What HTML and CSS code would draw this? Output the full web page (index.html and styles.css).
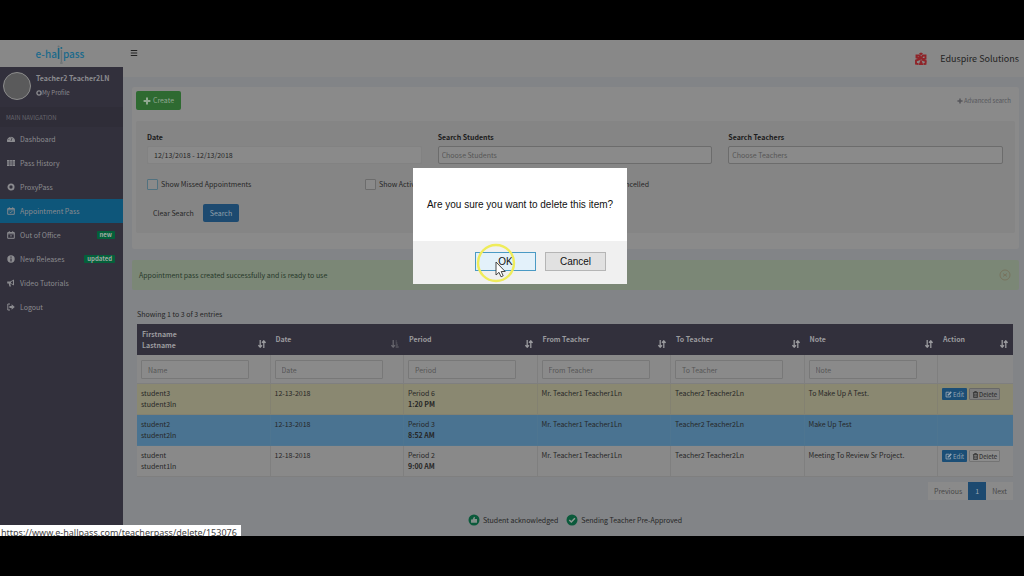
FILE: index.html
```html
<!DOCTYPE html>
<html lang="en">
<head>
<meta charset="utf-8">
<title>Appointment Pass</title>
<link rel="stylesheet" href="styles.css">
</head>
<body>
<svg class="defs" aria-hidden="true">
  <symbol id="sort" viewBox="0 0 8 8"><path d="M2.2 0v7M.4 5.2l1.8 2 1.8-2M5.8 8V1M4 2.8l1.8-2 1.8 2" fill="none" stroke="currentColor" stroke-width="1.3"/></symbol>
  <symbol id="sort-asc" viewBox="0 0 8 8"><path d="M2.2 0v7M.4 5.2l1.8 2 1.8-2" fill="none" stroke="currentColor" stroke-width="1.2"/><path d="M4.7 1h1M4.7 3h1.6M4.7 5h2.2M4.7 7h3" stroke="currentColor"/></symbol>
  <symbol id="edit" viewBox="0 0 8 8"><path d="M5 1.4H1.2v5.4h5.2V5" fill="none" stroke="currentColor"/><path d="M3 5.5l.3-1.7L6.6.4l1.2 1.2-3.3 3.5z" fill="currentColor"/></symbol>
  <symbol id="trash" viewBox="0 0 8 8"><path d="M1 1.8h6M3 1.6V.6h2v1M1.8 2v5.4h4.4V2M3.2 3v3.4M4.8 3v3.4" fill="none" stroke="currentColor" stroke-width=".8"/></symbol>
  <symbol id="plus" viewBox="0 0 8 8"><path d="M4 .6v6.8M.6 4h6.8" stroke="currentColor" stroke-width="2"/></symbol>
</svg>
<div class="app">
  <aside class="side">
    <a class="brand" href="#" aria-label="e-hallpass"><span>e-ha</span><svg class="people" viewBox="0 0 6 22"><circle cx="1.6" cy="3.6" r="1" fill="#6a7174"/><path d="M1.6 5v11" stroke="#1b6685" stroke-width="1.6"/><circle cx="4.4" cy="5" r="1" fill="#1b6685"/><path d="M4.4 7v12M3.2 20h2.400" stroke="#6a7174" stroke-width="1.4"/></svg><span>pass</span></a>
    <div class="user">
      <span class="avatar"></span>
      <div><strong>Teacher2 Teacher2LN</strong><a href="#"><svg class="tiny" viewBox="0 0 8 8"><circle cx="4" cy="4" r="2.8" fill="none" stroke="currentColor" stroke-width="1.8"/></svg>My Profile</a></div>
    </div>
    <h2>MAIN NAVIGATION</h2>
    <nav>
      <a href="#"><svg viewBox="0 0 8 8"><path d="M.2 7a4 4 0 1 1 7.6 0z" fill="currentColor"/><path d="M4 6l1-3M1.5 4.5h.8M3.5 2.3h.8" stroke="#32303c" stroke-width=".7"/></svg>Dashboard</a>
      <a href="#"><svg viewBox="0 0 8 8"><path d="M0 1h8v6H0z" fill="currentColor"/><path d="M0 3h8M0 5h8M2.7 1v6M5.3 1v6" stroke="#32303c" stroke-width=".5"/></svg>Pass History</a>
      <a href="#"><svg viewBox="0 0 8 8"><circle cx="4" cy="4" r="2.6" fill="none" stroke="currentColor" stroke-width="1.9"/></svg>ProxyPass</a>
      <a href="#" class="on"><svg viewBox="0 0 8 8"><path d="M.7 1.5h6.6v5.8H.7zM.7 2.8h6.6M2.3.2v1.6M5.7.2v1.6M2.6 4.8l1 1 2-2" fill="none" stroke="currentColor" stroke-width=".9"/></svg>Appointment Pass</a>
      <a href="#"><svg viewBox="0 0 8 8"><path d="M.7 1.5h6.6v5.8H.7zM.7 2.8h6.6M2.3.2v1.6M5.7.2v1.6M3.2 4.9h1.6" fill="none" stroke="currentColor"/></svg>Out of Office<b>new</b></a>
      <a href="#"><svg viewBox="0 0 8 8"><circle cx="4" cy="4" r="3.7" fill="currentColor"/><path d="M4 1.5v1.2M4 3.4v3" stroke="#32303c" stroke-width="1.2"/></svg>New Releases<b>updated</b></a>
      <a href="#"><svg viewBox="0 0 8 8"><path d="M.2 2.5h3L7 .5v6L3.2 4.6l.8 2.8H2.4L1.7 4.6H.2z" fill="currentColor"/><path d="M4 3l2-1v3L4 4.200z" fill="#32303c"/></svg>Video Tutorials</a>
      <a href="#"><svg viewBox="0 0 8 8"><path d="M3 1H.8v6H3" fill="none" stroke="currentColor"/><path d="M2.4 3h2.200V1.200L7.800 4 4.600 6.800V5H2.400z" fill="currentColor"/></svg>Logout</a>
    </nav>
  </aside>
  <div class="main">
    <header>
      <button class="menu" aria-label="Toggle navigation"><svg viewBox="0 0 8 8"><path d="M.8 1.500h6.400M.8 4h6.400M.8 6.500h6.400" stroke="currentColor" stroke-width="1.200"/></svg></button>
      <div class="org"><svg viewBox="0 0 14 14"><g fill="none" stroke="#8f2429" stroke-width="1.900"><path d="M6 6.500L2.500 5.500v-2h3L7 6.500l2-3h2.500v3.200L8 7M6 7L2 8.500v3.200L4.500 12M8 7.500l3.800 1.500-.3 2.800L9.500 12"/></g><path d="M7 7l2.400 6H4.600zM5 1.500l2-1 2 1-2 2z" fill="#8f2429"/></svg>Eduspire Solutions</div>
    </header>
    <main>
      <section class="panel">
        <div class="bar"><button class="create"><svg viewBox="0 0 8 8"><use href="#plus"/></svg>Create</button><a href="#"><svg class="tiny" viewBox="0 0 8 8"><use href="#plus"/></svg>Advanced search</a></div>
        <form class="well">
          <div class="fields">
            <div><label for="date">Date</label><input id="date" class="plain" value="12/13/2018 - 12/13/2018"></div>
            <div><label for="stu">Search Students</label><input id="stu" placeholder="Choose Students"></div>
            <div><label for="tea">Search Teachers</label><input id="tea" placeholder="Choose Teachers"></div>
          </div>
          <div class="checks">
            <label><input type="checkbox" class="focus">Show Missed Appointments</label>
            <label><input type="checkbox">Show Activated</label>
            <label><input type="checkbox">Show Cancelled</label>
          </div>
          <div class="actions"><button type="reset">Clear Search</button><button type="button" class="primary">Search</button></div>
        </form>
      </section>
      <div class="alert" role="status">Appointment pass created successfully and is ready to use<button aria-label="Dismiss"><svg viewBox="0 0 12 12"><g fill="none" stroke="#77705a" stroke-width=".9"><circle cx="6" cy="6" r="5"/><path d="M4 4.500l4 3M4 7.500l4-3"/></g></svg></button></div>
      <section class="list">
        <p>Showing 1 to 3 of 3 entries</p>
        <table>
          <colgroup><col><col><col><col><col><col><col class="act"></colgroup>
          <thead>
            <tr>
              <th><div>Firstname<br>Lastname<svg><use href="#sort"/></svg></div></th>
              <th><div>Date<svg class="dim"><use href="#sort-asc"/></svg></div></th>
              <th><div>Period<svg><use href="#sort"/></svg></div></th>
              <th><div>From Teacher<svg><use href="#sort"/></svg></div></th>
              <th><div>To Teacher<svg><use href="#sort"/></svg></div></th>
              <th><div>Note<svg><use href="#sort"/></svg></div></th>
              <th><div>Action<svg><use href="#sort"/></svg></div></th>
            </tr>
          </thead>
          <tbody>
            <tr class="filter">
              <td><input aria-label="Name" placeholder="Name"></td><td><input aria-label="Date" placeholder="Date"></td><td><input aria-label="Period" placeholder="Period"></td><td><input aria-label="From Teacher" placeholder="From Teacher"></td><td><input aria-label="To Teacher" placeholder="To Teacher"></td><td><input aria-label="Note" placeholder="Note"></td><td></td>
            </tr>
            <tr class="yellow"><td>student3<br>student3ln</td><td>12-13-2018</td><td>Period 6<br><b>1:20 PM</b></td><td>Mr. Teacher1 Teacher1Ln</td><td>Teacher2 Teacher2Ln</td><td>To Make Up A Test.</td><td><div class="btns"><button class="edit"><svg viewBox="0 0 8 8"><use href="#edit"/></svg>Edit</button><button class="del hover"><svg viewBox="0 0 8 8"><use href="#trash"/></svg>Delete</button></div></td></tr>
            <tr class="blue"><td>student2<br>student2ln</td><td>12-13-2018</td><td>Period 3<br><b>8:52 AM</b></td><td>Mr. Teacher1 Teacher1Ln</td><td>Teacher2 Teacher2Ln</td><td>Make Up Test</td><td></td></tr>
            <tr><td>student<br>student1ln</td><td>12-18-2018</td><td>Period 2<br><b>9:00 AM</b></td><td>Mr. Teacher1 Teacher1Ln</td><td>Teacher2 Teacher2Ln</td><td>Meeting To Review Sr Project.</td><td><div class="btns"><button class="edit"><svg viewBox="0 0 8 8"><use href="#edit"/></svg>Edit</button><button class="del"><svg viewBox="0 0 8 8"><use href="#trash"/></svg>Delete</button></div></td></tr>
          </tbody>
        </table>
        <div class="pages"><a href="#">Previous</a><a href="#" class="on">1</a><a href="#">Next</a></div>
        <div class="legend">
          <span><svg viewBox="0 0 12 12"><circle cx="6" cy="6" r="5.500" fill="#0b5a3b"/><path d="M3 5.500h1.500L6 2.800l1 .4-.3 1.800H9v3.800H3z" fill="#82908a"/></svg>Student acknowledged</span>
          <span><svg viewBox="0 0 12 12"><circle cx="6" cy="6" r="5.500" fill="#0b5a3b"/><path d="M3.300 6l2 2 3.600-3.800" fill="none" stroke="#8f9994" stroke-width="1.500"/></svg>Sending Teacher Pre-Approved</span>
        </div>
      </section>
    </main>
  </div>
  <div class="status">https://www.e-hallpass.com/teacherpass/delete/153076</div>
  <div class="dialog" role="alertdialog" aria-labelledby="msg">
    <p id="msg">Are you sure you want to delete this item?</p>
    <div class="foot"><button class="ok">OK</button><button>Cancel</button></div>
    <svg class="pointer" viewBox="0 0 40 40"><circle cx="20" cy="20" r="18" fill="none" stroke="#efec5a" stroke-width="2.400"/><path d="M20 19v13l3-2.700 2 4.500 2.200-1-2-4.300h4z" fill="#fff" stroke="#333" stroke-width=".9"/></svg>
  </div>
</div>
</body>
</html>
```
FILE: styles.css
```css
* { box-sizing: border-box; }
body {
  margin: 0;
  background: #000;
  font: 7px/11px "Noto Sans CJK SC", "Noto Sans", sans-serif;
  color: #262626;
}
a { color: inherit; text-decoration: none; }
button, input { font: inherit; color: inherit; margin: 0; }
button { border: 0; background: none; padding: 0; }
h2, p { margin: 0; font: inherit; }
svg { width: 8px; height: 8px; flex: none; }
.defs { position: absolute; width: 0; height: 0; }
.app {
  position: relative;
  display: flex;
  height: calc(100vh - 80px);
  margin: 40px 0;
  overflow: hidden;
}

.side { width: 123px; flex: none; background: #32303c; color: #8b8b8f; }
.brand {
  display: flex;
  align-items: center;
  justify-content: center;
  height: 27px;
  padding-right: 3px;
  background: #888;
  color: #1b6a8c;
  font: 500 10px/20px "Noto Sans CJK SC", sans-serif;
}
.brand .people { width: 6px; height: 22px; }
.user { display: flex; gap: 5px; padding: 5px 3px; height: 40px; }
.user div { display: flex; flex-direction: column; gap: 3px; padding-top: 1px; }
.user a { display: flex; align-items: center; font-size: 6px; }
.tiny { width: 6px; height: 6px; }
.avatar { width: 28px; height: 28px; border: 1px solid #8c8c8c; border-radius: 50%; background: #5a5a5b; }
.side h2 { height: 20px; padding: 5px 6px; font-size: 6px; color: #66656d; background: #2f2d38; }
nav a { display: flex; align-items: center; gap: 5px; height: 24px; padding: 0 8px 0 7px; }
nav a.on { background: #0e567a; }
nav b { margin-left: auto; padding: 0 3px; background: #04603a; color: #a0aaa5; border-radius: 1px; font-size: 6px; line-height: 8px; }

.main { flex: 1; min-width: 0; background: #828487; }
header { display: flex; align-items: center; justify-content: space-between; height: 37px; padding: 0 5px 0 7px; background: #888; }
.menu { display: flex; align-items: center; height: 10px; margin-bottom: 11px; color: #222; }
.org { display: flex; align-items: center; gap: 12px; font-size: 9px; color: #242424; }
.org svg { width: 14px; height: 14px; }

main { padding: 10px 5px 0 9px; }
.panel { padding: 4px 4px 16px; background: #8a8a8a; border-radius: 2px; }
.bar { display: flex; align-items: center; justify-content: space-between; padding-right: 4px; }
.bar a { display: flex; align-items: center; gap: 1px; font-size: 6px; color: #55565b; }
.create { display: flex; align-items: center; gap: 2px; height: 19px; padding: 0 7px; border-radius: 2px; background: #2e6a31; color: #91a892; }
.well { margin-top: 11px; padding: 11px 12px 11px 11px; height: 112px; background: #858585; border-radius: 2px; }
.fields { display: grid; grid-template-columns: repeat(3, 1fr); gap: 16px; }
.fields label { display: block; font-weight: 700; color: #1c1c1c; }
.fields input { width: 100%; height: 18px; margin-top: 3px; padding: 0 3px; border: 1px solid #6c6c6c; border-radius: 2px; background: #8a8a8a; }
.fields input.plain { padding: 0 6px; border-color: #828282; }
::placeholder { color: #565656; opacity: 1; }
.checks { display: grid; grid-template-columns: repeat(4, 1fr); column-gap: 16px; margin-top: 14px; }
.checks label { display: flex; align-items: center; gap: 3px; height: 12px; }
.checks input { appearance: none; width: 11px; height: 11px; border: 1px solid #6c6c6c; border-radius: 1px; background: #8a8a8a; }
.checks input.focus { border-color: #51717f; }
.actions { display: flex; gap: 3px; margin-top: 14px; }
.actions button { height: 18px; padding: 0 6px; border-radius: 2px; }
.actions .primary { padding: 0 7px; background: #1d4a70; color: #91a0ac; }

.alert { display: flex; align-items: center; justify-content: space-between; height: 30px; margin-top: 11px; padding: 0 8px 0 7px; border-radius: 2px; background: #7b8776; color: #27392a; }
.alert button, .alert svg { display: block; width: 12px; height: 12px; }

.list { padding: 19px 6px 0 5px; }
.list p { margin-bottom: 4px; }
table { width: 100%; table-layout: fixed; border-collapse: separate; border-spacing: 0; background: #898989; }
.act { width: 75px; }
th, td { padding: 4px; text-align: left; vertical-align: top; border-right: 1px solid #7f7f7f; border-bottom: 1px solid #7f7f7f; }
th { height: 31px; padding: 0 5px; background: #32303c; color: #9a9a9e; border: 0; vertical-align: middle; }
th div { position: relative; }
th svg { position: absolute; right: 0; top: 50%; }
th .dim { color: #69686f; }
.filter input { display: block; width: 108px; height: 19px; padding: 0 6px; border: 1px solid #787878; border-radius: 1px; background: #8a8a8a; }
.filter td { padding: 5px 4px 4px; height: 29px; }
.yellow td { background: #8a8871; border-color: #838171; }
.blue td { background: #4a7391; border-color: #4e7590; }
th:last-child, td:last-child { border-right: 0; }
.btns { display: flex; gap: 2px; }
.btns button { display: flex; align-items: center; gap: 1px; height: 12px; padding: 0 3px; border-radius: 1px; font-size: 6px; }
.btns svg { width: 7px; height: 7px; }
.edit { background: #1b4e76; color: #97a6b2; }
.btns .del { padding: 0 2px; gap: 0; border: 1px solid #747474; background: #8c8c8c; }
.btns .hover { background: #7d7d7d; border-color: #686868; }
.pages { display: flex; width: max-content; margin: 5px 0 0 auto; background: #8a8a8a; color: #484848; }
.pages a { padding: 4px 6px; line-height: 10px; }
.pages .on { padding: 4px 7px; background: #1d4a70; color: #9aa8b3; }
.legend { display: flex; justify-content: center; gap: 8px; margin-top: 14px; }
.legend span { display: flex; align-items: center; gap: 3px; }
.legend svg { width: 12px; height: 12px; }

.status { position: absolute; left: 0; bottom: 0; height: 11px; padding: 0 4px 0 1px; background: #fff; color: #444; font: 9px/16px "Noto Sans", sans-serif; overflow: hidden; }
.dialog { position: absolute; left: calc(50% - 99px); top: 128px; width: 214px; background: #fff; color: #111; font: 10px/14px "Liberation Sans", Arial, sans-serif; }
.dialog p { padding: 30px 0 29px; text-align: center; white-space: nowrap; }
.foot { display: flex; justify-content: flex-end; gap: 9px; padding: 11px 21px 13px; background: #f0f0f0; }
.foot button { width: 61px; height: 19px; border: 1px solid #b5b5b5; background: #e1e1e1; }
.foot .ok { border-color: #4a9ac4; background: #e3f1fa; }
.pointer { position: absolute; left: 63px; top: 75px; width: 40px; height: 40px; }
```
